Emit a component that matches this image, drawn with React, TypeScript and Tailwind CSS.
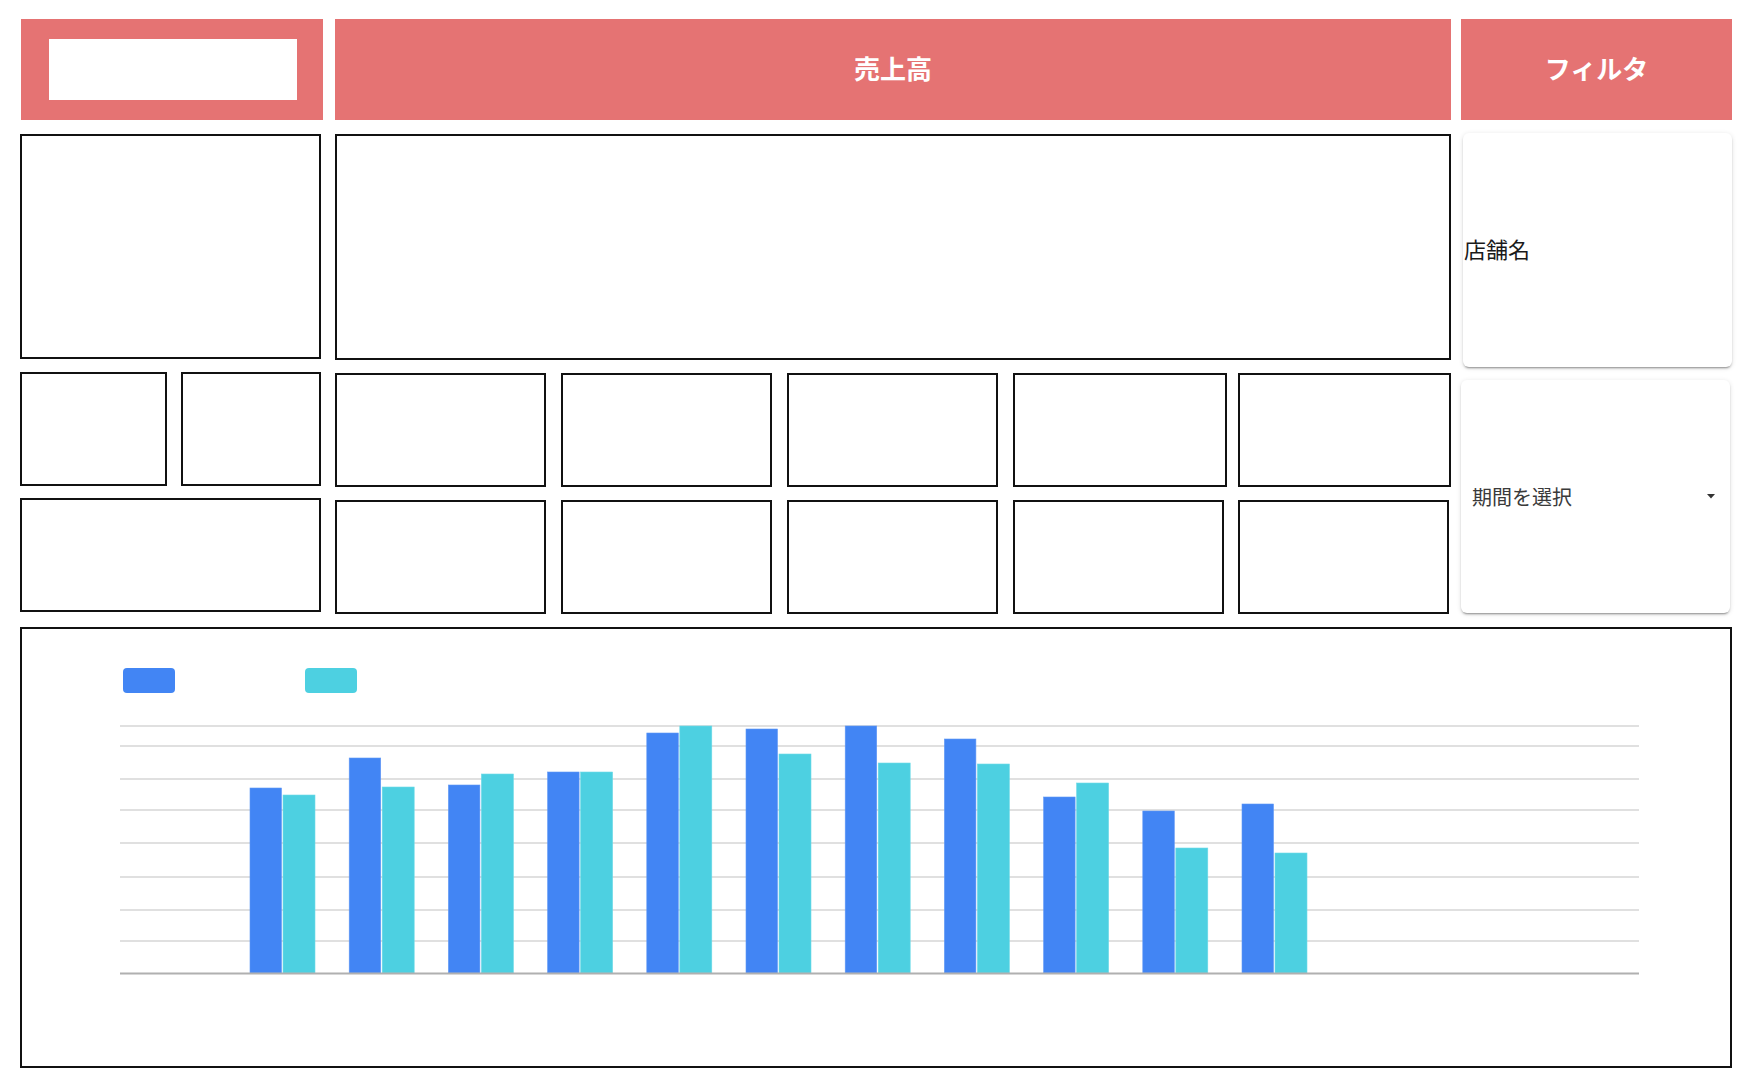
import React from "react";

const bars: [number, number][] = [
  [185, 178],
  [215, 186],
  [188, 199],
  [201, 201],
  [240, 247],
  [244, 219],
  [247, 210],
  [234, 209],
  [176, 190],
  [162, 125],
  [169, 120],
];

const gridLines = [1, 21, 54, 85, 118, 152, 185, 216];

function Box({ className = "" }: { className?: string }) {
  return <div className={`border-2 border-[#111] bg-white ${className}`} />;
}

function SalesChart() {
  return (
    <div className="border-2 border-[#111] h-[441px] pt-[39px] pl-[101px]">
      <div className="flex gap-[130px] h-[25px]">
        <div className="w-[52px] h-[25px] rounded-[4px] bg-[#4285f4]" />
        <div className="w-[52px] h-[25px] rounded-[4px] bg-[#4dd0e1]" />
      </div>
      <svg width="1519" height="252" className="mt-[32px] -ml-[3px] block">
        {gridLines.map((y) => (
          <line key={y} x1="0" x2="1519" y1={y} y2={y} stroke="#d6d6d6" strokeWidth="1.5" />
        ))}
        {bars.map(([a, b], i) => {
          const x = 130 + i * 99.2;
          return (
            <g key={i}>
              <rect x={x} y={248 - a} width="31.5" height={a} fill="#4285f4" stroke="#5f97f6" strokeWidth="0.6" />
              <rect x={x + 33} y={248 - b} width="32" height={b} fill="#4dd0e1" stroke="#6ed9e7" strokeWidth="0.6" />
            </g>
          );
        })}
        <line x1="0" x2="1519" y1="248.5" y2="248.5" stroke="#b0b0b0" strokeWidth="2" />
      </svg>
    </div>
  );
}

const cardShadow =
  "shadow-[0_3px_1px_-2px_rgba(0,0,0,0.2),0_2px_2px_0_rgba(0,0,0,0.14),0_1px_5px_0_rgba(0,0,0,0.12)]";

export default function App() {
  return (
    <div
      className="w-[1744px] h-[1078px] bg-white pl-[20px] pr-[12px] pt-[19px]"
      style={{ fontFamily: '"Noto Sans CJK JP", "Noto Sans", sans-serif' }}
    >
      <div className="flex">
        {/* left column */}
        <div className="w-[301px] flex flex-col">
          <div className="h-[101px] bg-[#e57373] flex items-center pl-[28px] ml-[1px] -mr-[2px]">
            <div className="w-[248px] h-[61px] bg-white" />
          </div>
          <Box className="h-[225px] mt-[14px]" />
          <div className="flex justify-between mt-[13px]">
            <Box className="w-[147px] h-[114px]" />
            <Box className="w-[140px] h-[114px]" />
          </div>
          <Box className="h-[114px] mt-[12px]" />
        </div>

        {/* middle column */}
        <div className="w-[1116px] ml-[14px] flex flex-col">
          <div className="h-[101px] bg-[#e57373] flex items-center justify-center pb-[4px] text-white text-[26px] font-bold">
            売上高
          </div>
          <Box className="h-[226px] mt-[14px]" />
          <div className="flex mt-[13px]">
            <Box className="w-[211px] h-[114px]" />
            <Box className="w-[211px] h-[114px] ml-[15px]" />
            <Box className="w-[211px] h-[114px] ml-[15px]" />
            <Box className="w-[214px] h-[114px] ml-[15px]" />
            <Box className="w-[213px] h-[114px] ml-[11px]" />
          </div>
          <div className="flex mt-[13px]">
            <Box className="w-[211px] h-[114px]" />
            <Box className="w-[211px] h-[114px] ml-[15px]" />
            <Box className="w-[211px] h-[114px] ml-[15px]" />
            <Box className="w-[211px] h-[114px] ml-[15px]" />
            <Box className="w-[211px] h-[114px] ml-[14px]" />
          </div>
        </div>

        {/* filter column */}
        <div className="w-[271px] ml-[10px] flex flex-col">
          <div className="h-[101px] bg-[#e57373] flex items-center justify-center pb-[4px] text-white text-[26px] font-bold">
            フィルタ
          </div>
          <div className={`h-[234px] mt-[13px] ml-[2px] rounded-md bg-white flex items-center pb-[4px] ${cardShadow}`}>
            <span className="text-[22px] text-[#1a1a1a] pl-[1px]">店舗名</span>
          </div>
          <div className={`h-[233px] mt-[13px] mr-[2px] rounded-md bg-white flex items-center justify-between pl-[11px] pr-[15px] ${cardShadow}`}>
            <span className="text-[20px] text-[#3a3a3a]">期間を選択</span>
            <svg width="8" height="5" viewBox="0 0 8 5">
              <polygon points="0,0 8,0 4,4.5" fill="#333" />
            </svg>
          </div>
        </div>
      </div>

      <div className="mt-[13px]">
        <SalesChart />
      </div>
    </div>
  );
}
